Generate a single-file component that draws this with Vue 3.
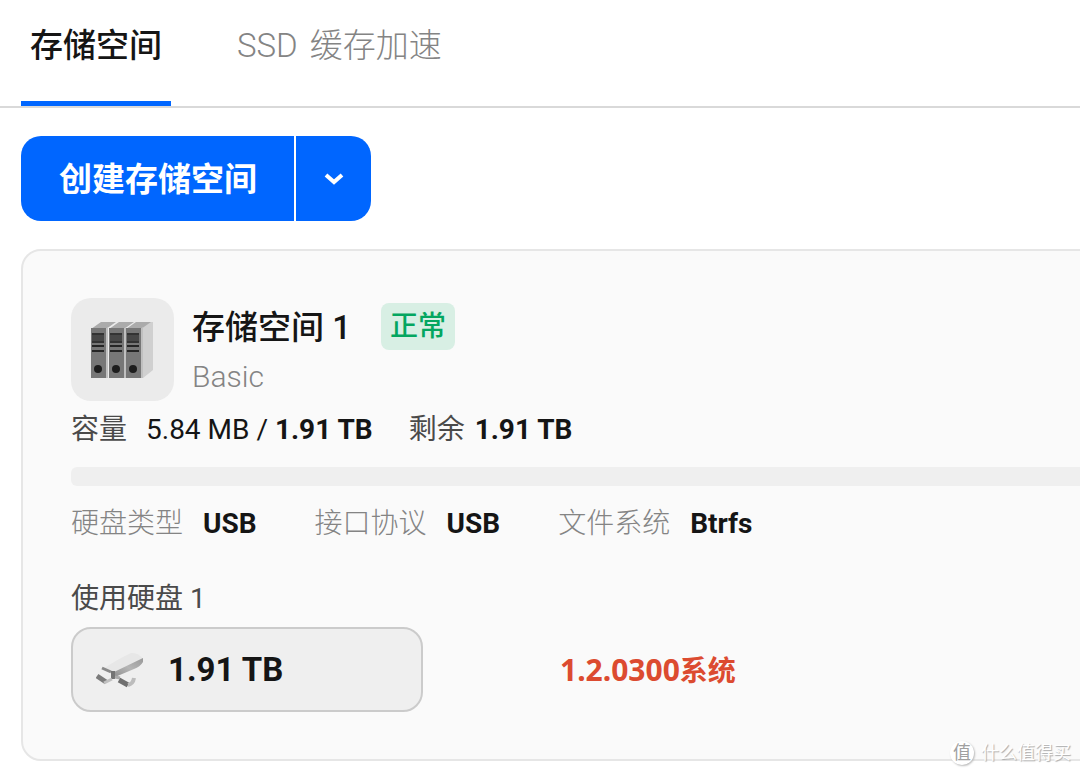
<script setup>
const specs = [
  { label: '硬盘类型', value: 'USB' },
  { label: '接口协议', value: 'USB' },
  { label: '文件系统', value: 'Btrfs' },
]
const bays = [11, 29, 46]
</script>

<template>
  <div class="page">
    <nav class="tabs">
      <a href="#storage" class="tab active" aria-current="page">存储空间</a>
      <a href="#cache" class="tab"><span>SSD</span> <span>缓存加速</span></a>
    </nav>

    <main class="content">
      <div class="actions">
        <button type="button" class="create">创建存储空间</button>
        <button type="button" class="more" aria-label="更多">
          <svg width="20" height="12" viewBox="0 0 20 12">
            <path d="M2 2 L10 9 L18 2" fill="none" stroke="#fff" stroke-width="4" />
          </svg>
        </button>
      </div>

      <section class="card">
        <header class="head">
          <div class="tile">
            <svg width="103" height="103" viewBox="0 0 103 103">
              <g transform="translate(9 0)">
                <path d="M49 31 L61 24 H73 V72 L63 80 H49 Z" fill="#d0d0d0" />
                <g v-for="x in bays" :key="x">
                  <path :d="`M${x} 31 L${x + 10} 24 H${x + 25} L${x + 15} 31 Z`" fill="#ababab" />
                  <path :d="`M${x + 14} 31 L${x + 17} 29 V80 H${x + 14} Z`" fill="#c0c0c0" />
                  <rect :x="x" y="30" width="15" height="50" fill="#777" />
                  <rect :x="x + 1" y="35" width="12" height="10" fill="#474747" />
                  <path :d="`M${x + 1} 36 h12 M${x + 1} 44 h12`" stroke="#333" stroke-width="2" />
                  <path :d="`M${x + 1} 48 h12 M${x + 1} 53 h12`" stroke="#252525" stroke-width="2" />
                  <circle :cx="x + 7" cy="71" r="4" fill="#1d1d1d" />
                </g>
              </g>
            </svg>
          </div>
          <div class="titles">
            <div class="title-row">
              <h2>存储空间 1</h2>
              <span class="badge">正常</span>
            </div>
            <p class="kind">Basic</p>
          </div>
        </header>

        <div class="capacity">
          <span class="cap-label">容量</span>
          <span class="used">5.84 MB / <b>1.91 TB</b></span>
          <span class="left"><span>剩余</span><b>1.91 TB</b></span>
        </div>
        <div class="bar"></div>

        <dl class="specs">
          <div v-for="s in specs" :key="s.label" class="spec">
            <dt>{{ s.label }}</dt>
            <dd>{{ s.value }}</dd>
          </div>
        </dl>

        <p class="disks-label">使用硬盘 1</p>
        <div class="disks">
          <button type="button" class="disk">
            <svg width="50" height="40" viewBox="0 0 50 40">
              <defs>
                <linearGradient id="side" x1="0" y1="1" x2="1" y2="0">
                  <stop offset="0" stop-color="#8f8f8f" />
                  <stop offset="0.5" stop-color="#b5b5b5" />
                  <stop offset="1" stop-color="#999" />
                </linearGradient>
              </defs>
              <path d="M7 19 Q22 9 35 3 Q42 2 47 9 L19 23 Z" fill="#e7e7e7" />
              <path d="M18 22 L47 8 V12 Q44 17 38 19 L19 27 Z" fill="url(#side)" />
              <path d="M6 18 L15 22" stroke="#8a8a8a" stroke-width="3" fill="none" />
              <path d="M15 21 L19 21 V29 L15 29 Z" fill="#747474" />
              <path d="M1 26 L10 32" stroke="#7b7b7b" stroke-width="5" fill="none" />
              <path d="M8 33 L16 29" stroke="#c0c0c0" stroke-width="3" fill="none" />
              <path d="M19 27 L24 28" stroke="#aaa" stroke-width="3" fill="none" />
              <path d="M23 30 L32 35" stroke="#6f6f6f" stroke-width="5" fill="none" />
              <path d="M32 35 Q37 34 38 28" stroke="#bcbcbc" stroke-width="4" fill="none" />
            </svg>
            <span>1.91 TB</span>
          </button>
          <p class="note"><span>1.2.0300</span>系统</p>
        </div>
      </section>
    </main>

    <div class="watermark">
      <span class="seal">值</span>
      <span>什么值得买</span>
    </div>
  </div>
</template>

<style>
body {
  background: #fff;
  overflow: hidden;
}
</style>

<style scoped>
.page {
  position: relative;
  min-height: 100vh;
  overflow: hidden;
  box-sizing: border-box;
  font-family: Roboto, "Noto Sans CJK SC", sans-serif;
  font-size: 28px;
  line-height: 40px;
  color: #151515;
}
h2, p, dl, dd { margin: 0; }
button {
  font: inherit;
  color: inherit;
  border: 0;
  padding: 0;
  cursor: pointer;
}
.tabs {
  display: flex;
  gap: 56px;
  padding-left: 21px;
  border-bottom: 2px solid #d9d9d9;
}
.tab {
  display: flex;
  gap: 12px;
  box-sizing: border-box;
  height: 106px;
  padding: 22px 10px 0;
  font-size: 33px;
  line-height: 48px;
  font-weight: 300;
  color: #848484;
  text-decoration: none;
  border-bottom: 5px solid transparent;
}
.tab.active {
  padding: 22px 9px 0;
  color: #151515;
  font-weight: 500;
  border-bottom-color: #06f;
}
.content { padding: 28px 0 0 21px; }
.actions {
  display: flex;
  gap: 2px;
  height: 85px;
}
.create, .more {
  background: #06f;
  color: #fff;
}
.create {
  padding: 2px 37px 0 38px;
  border-radius: 20px 0 0 20px;
  font-size: 33px;
  font-weight: 700;
}
.more {
  display: grid;
  place-items: center;
  width: 75px;
  border-radius: 0 20px 20px 0;
}
.card {
  margin: 28px -20px 0 0;
  padding: 47px 0 47px 48px;
  background: #fafafa;
  border: 2px solid #e6e6e6;
  border-radius: 20px;
}
.head {
  display: flex;
  gap: 18px;
}
.tile {
  width: 103px;
  height: 103px;
  border-radius: 20px;
  background: #ebebeb;
}
.tile svg { display: block; }
.title-row {
  display: flex;
  gap: 30px;
  margin-top: 5px;
}
h2 {
  padding-top: 1px;
  font-size: 33px;
  line-height: 48px;
  font-weight: 500;
}
.badge {
  height: 47px;
  padding: 0 9px;
  border-radius: 8px;
  background: #d8efe4;
  color: #04a660;
  font-weight: 500;
  line-height: 47px;
}
.kind {
  margin-top: 5px;
  font-size: 30px;
  font-weight: 300;
  color: #848484;
}
.capacity {
  display: flex;
  margin-top: 9px;
}
.cap-label, .left { color: #4a4a4a; }
.used { margin-left: 19px; }
.left {
  display: flex;
  gap: 10px;
  margin-left: 36px;
}
.capacity b {
  color: #151515;
  font-weight: 700;
}
.bar {
  height: 19px;
  margin-top: 17px;
  border-radius: 6px 0 0 6px;
  background: #efefef;
}
.specs {
  display: flex;
  gap: 58px;
  margin-top: 18px;
}
.spec {
  display: flex;
  gap: 20px;
}
dt {
  color: #848484;
  font-weight: 300;
}
dd { font-weight: 700; }
.disks-label {
  margin-top: 35px;
  color: #4a4a4a;
}
.disks {
  display: flex;
  align-items: center;
  gap: 137px;
  margin-top: 8px;
}
.disk {
  display: flex;
  align-items: center;
  gap: 22px;
  box-sizing: border-box;
  width: 352px;
  height: 85px;
  padding-left: 23px;
  border: 2px solid #cbcbcb;
  border-radius: 20px;
  background: #efefef;
  font-size: 33px;
  font-weight: 700;
}
.note {
  color: #dc4b30;
  font-weight: 700;
  font-family: "Noto Sans", "Noto Sans CJK SC", sans-serif;
}
.note span { font-size: 30px; }
.watermark {
  position: absolute;
  right: 9px;
  bottom: 9px;
  display: flex;
  align-items: center;
  gap: 7px;
  font-size: 18px;
  line-height: 26px;
  color: #fff;
  text-shadow: 1px 1px 1px #aaa;
}
.seal {
  width: 24px;
  height: 24px;
  line-height: 24px;
  text-align: center;
  border-radius: 50%;
  background: #fff;
  color: #a0a0a0;
  text-shadow: none;
  box-shadow: 1px 1px 2px #bbb;
}
</style>
